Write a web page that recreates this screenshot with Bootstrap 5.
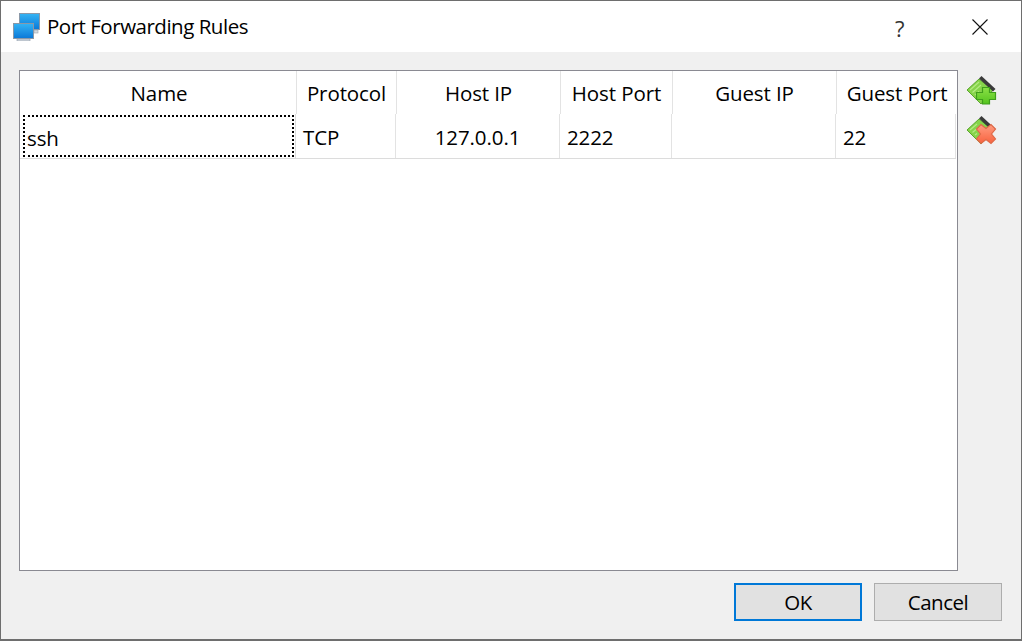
<!DOCTYPE html>
<html lang="en">
<head>
<meta charset="utf-8">
<title>Port Forwarding Rules</title>
<link href="https://cdn.jsdelivr.net/npm/bootstrap@5.3.0/dist/css/bootstrap.min.css" rel="stylesheet">
<style>
html,body{height:100%;margin:0;overflow:hidden;background:#f0f0f0}
body{font-family:"Open Sans","Noto Sans","Liberation Sans",sans-serif;font-size:20.5px;color:#000}
.pf-win{height:641px;width:1022px;border:1px solid #6e6e6e;border-bottom-width:2px;background:#f0f0f0}
.pf-title{height:51px;background:#fff;padding:0 0 0 11px;gap:7px;font-size:20.5px}
.pf-title-txt{letter-spacing:-.48px}
.pf-help{position:absolute;left:894px;top:11px;font-size:22px;color:#333}
.pf-x{position:absolute;left:971px;top:18px}
.pf-main{padding:18px 0 0 18px;gap:8px;height:519px}
.pf-frame{width:939px;height:501px;background:#fff;border:1px solid #8a8a92}
.pf-head,.pf-row{display:flex}
.pf-head{height:43px}
.pf-cell{display:flex;align-items:center;justify-content:center;border-right:1px solid #e3e3e3;flex:none;letter-spacing:-.1px;white-space:nowrap}
.pf-head .pf-cell{padding-top:2px}
.pf-head .pf-cell:nth-child(1){width:277px;padding-left:2px}
.pf-head .pf-cell:nth-child(2){width:100px}
.pf-head .pf-cell:nth-child(3){width:164px}
.pf-head .pf-cell:nth-child(4){width:112px}
.pf-head .pf-cell:nth-child(5){width:164px}
.pf-head .pf-cell:nth-child(6){width:120px;border-right:0}
.pf-row{height:45px;border-bottom:1px solid #dcdcdc;width:936px}
.pf-row .pf-cell{justify-content:flex-start;padding:3px 0 0 7px}
.pf-row .pf-cell:nth-child(1){width:276px;padding:0;position:relative;border-right:1px solid #dcdcdc}
.pf-row .pf-cell:nth-child(2){width:100px}
.pf-row .pf-cell:nth-child(3){width:164px;justify-content:center;padding-left:0}
.pf-row .pf-cell:nth-child(4){width:112px}
.pf-row .pf-cell:nth-child(5){width:164px}
.pf-row .pf-cell:nth-child(6){width:120px}
.pf-focus{position:absolute;left:3px;top:1px;width:271px;height:42px;border:2px dotted #000;padding:4px 0 0 2px;display:flex;align-items:center}
.pf-tools{gap:8px;padding-top:5px}
.pf-foot{height:69px;padding:12px 19px 0 0;gap:12px}
.pf-btn{width:128px;height:38px;background:#e1e1e1;border:1px solid #adadad;border-radius:0;font-size:20.5px;padding:0;color:#000;letter-spacing:-.5px;line-height:1}
.pf-btn:hover{background:#e1e1e1;border-color:#adadad;color:#000}
.pf-ok,.pf-ok:hover{border:2px solid #0078d7}
</style>
</head>
<body>
<div class="pf-win position-relative">
  <div class="pf-title d-flex align-items-center">
    <svg width="28" height="28" viewBox="0 0 28 28" aria-hidden="true">
      <defs>
        <linearGradient id="scr" x1="0" y1="0" x2="0" y2="1"><stop offset="0" stop-color="#35b4f4"/><stop offset="1" stop-color="#0a78d8"/></linearGradient>
        <linearGradient id="pg" x1="0" y1="0" x2="0" y2="1"><stop offset="0" stop-color="#8ae046"/><stop offset="1" stop-color="#55c41e"/></linearGradient>
        <linearGradient id="rg" x1="0" y1="0" x2="0" y2="1"><stop offset="0" stop-color="#ff9c80"/><stop offset="1" stop-color="#f8633f"/></linearGradient>
      </defs>
      <rect x="7.500" y="0.500" width="20" height="16" fill="url(#scr)" stroke="#8a98a8"/>
      <rect x="22" y="17" width="4" height="3" fill="#d5dbe0" stroke="#9aa4ae" stroke-width=".6"/>
      <rect x="1.500" y="10.500" width="20" height="15" fill="url(#scr)" stroke="#8a98a8"/>
      <rect x="5" y="26" width="13" height="2" fill="#d5dbe0" stroke="#8a98a8" stroke-width=".6"/>
    </svg>
    <span class="pf-title-txt">Port Forwarding Rules</span>
    <span class="pf-help">?</span>
    <svg class="pf-x" width="16" height="16" viewBox="0 0 16 16" aria-hidden="true"><path d="M.5.5l15 15M15.500.5l-15 15" stroke="#111" stroke-width="1.100" fill="none"/></svg>
  </div>
  <div class="pf-main d-flex">
    <div class="pf-frame">
      <div class="pf-head">
        <div class="pf-cell">Name</div><div class="pf-cell">Protocol</div><div class="pf-cell">Host IP</div><div class="pf-cell">Host Port</div><div class="pf-cell">Guest IP</div><div class="pf-cell">Guest Port</div>
      </div>
      <div class="pf-row">
        <div class="pf-cell"><span class="pf-focus">ssh</span></div><div class="pf-cell">TCP</div><div class="pf-cell">127.0.0.1</div><div class="pf-cell">2222</div><div class="pf-cell"></div><div class="pf-cell">22</div>
      </div>
    </div>
    <div class="pf-tools d-flex flex-column">
      <svg width="32" height="32" viewBox="0 0 32 32" aria-hidden="true">
        <path d="M1 15L13 4L27 15L15 29Z" fill="#86d44a" stroke="#5aa52c"/>
        <path d="M13 3.500L15.500 1L29.500 14L27 16.500Z" fill="#3a3a3a"/>
        <path d="M4 15L13 7M6.500 17.500L15 10M9 20L13 16.500" stroke="#b4ea84" stroke-width="1.200" fill="none"/>
        <path d="M16.500 12.500h7v5h6v7h-6v4.500h-7v-4.500h-6v-7h6z" fill="url(#pg)" stroke="#3f9e1c" stroke-width="1.200"/>
      </svg>
      <svg width="32" height="32" viewBox="0 0 32 32" aria-hidden="true">
        <path d="M1 15L13 4L27 15L15 29Z" fill="#86d44a" stroke="#5aa52c"/>
        <path d="M13 3.500L15.500 1L29.500 14L27 16.500Z" fill="#3a3a3a"/>
        <path d="M4 15L11 9M6.500 17.500L10.500 14M9 20L11 18.500" stroke="#b4ea84" stroke-width="1.200" fill="none"/>
        <path d="M15 9.500L20 13.500L25 9.500L29.500 14L25.500 19L29.500 24L25 28.500L20 24.500L15 28.500L10.500 24L14.500 19L10.500 14Z" fill="url(#rg)" stroke="#df6a48" stroke-width="1.200"/>
      </svg>
    </div>
  </div>
  <div class="pf-foot d-flex justify-content-end">
    <button type="button" class="btn pf-btn pf-ok">OK</button>
    <button type="button" class="btn pf-btn">Cancel</button>
  </div>
</div>
</body>
</html>
